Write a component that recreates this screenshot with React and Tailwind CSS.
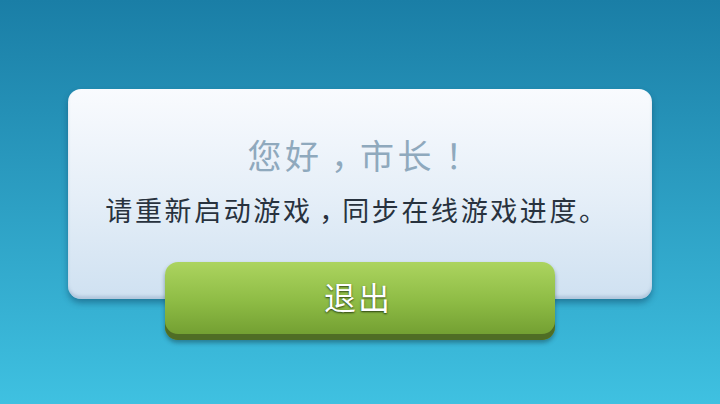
export default function App() {
  return (
    <div
      className="flex h-[404px] w-[720px] flex-col items-center bg-gradient-to-b from-[#1a7ea6] to-[#3fc1e1] pt-[89px]"
      style={{ fontFamily: '"Noto Sans CJK SC", "Noto Sans", sans-serif' }}
    >
      {/* dialog panel */}
      <div className="flex h-[210px] w-[584px] flex-col items-center rounded-[13px] bg-gradient-to-b from-[#f9fbfe] via-[#e6eff8] to-[#cfe1f1] pt-[45px] shadow-[0_4px_6px_rgba(10,60,90,0.45),inset_0_-3px_3px_rgba(120,150,180,0.35)]">
        <p className="text-[34px] leading-[42px] tracking-[3.5px] text-[#8fa9bd]">
          您好
          <span className="inline-block w-[1.1em] text-center [font-feature-settings:'halt']">
            ，
          </span>
          市长<span className="relative left-[0.3em]">！</span>
        </p>
        <p className="mt-[16px] pr-[6px] text-[27px] leading-[36px] tracking-[2.6px] text-[#28323e]">
          请重新启动游戏
          <span className="inline-block w-[1.1em] text-center [font-feature-settings:'halt']">
            ，
          </span>
          同步在线游戏进度。
        </p>
      </div>

      {/* exit button */}
      <button className="-mt-[37px] flex h-[78px] w-[390px] items-center justify-center rounded-[13px] bg-gradient-to-b from-[#acd45f] via-[#8ebc45] to-[#6f9b2f] pb-[10px] pr-[4px] text-[32px] leading-none tracking-[2px] text-white shadow-[inset_0_-6px_0_#4f6d25,0_3px_4px_rgba(20,60,70,0.45)] [text-shadow:0_1px_2px_rgba(30,50,10,0.9)]">
        退出
      </button>
    </div>
  );
}
